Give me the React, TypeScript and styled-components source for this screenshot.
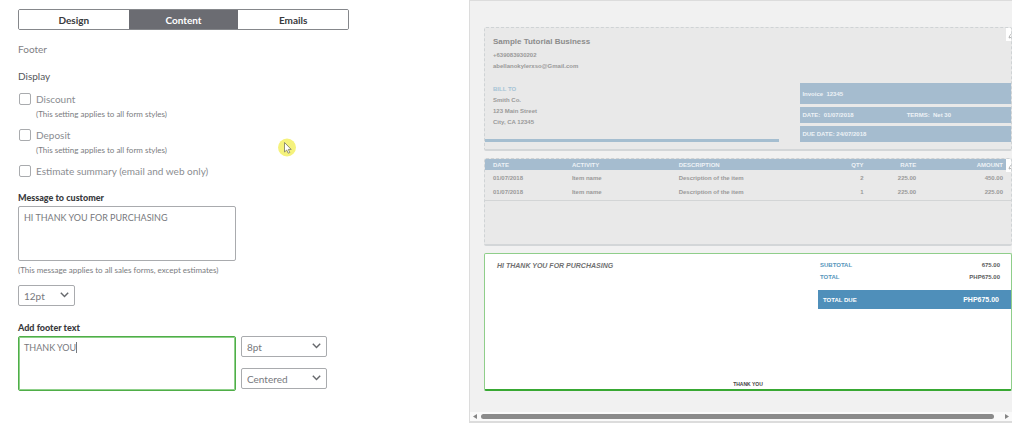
import React from "react";
import styled, { createGlobalStyle } from "styled-components";

const GlobalStyle = createGlobalStyle`
  *, *::before, *::after { box-sizing: border-box; }
  body {
    margin: 0;
    background: #fff;
    color: #7a7c80;
    font-family: Lato, "Liberation Sans", sans-serif;
  }
`;

const Page = styled.div`
  position: relative;
  display: grid;
  grid-template-columns: minmax(0, 469fr) minmax(0, 543fr);
  align-items: start;
  padding-right: 12px;
`;

/* ---------- settings column ---------- */

const Settings = styled.form`
  display: flex;
  flex-direction: column;
  align-items: flex-start;
  padding: 9px 18px 0;
`;

const Tabs = styled.div`
  display: flex;
  width: 100%;
  max-width: 331px;
  height: 21px;
  border: 1px solid #85878b;
  border-radius: 2px;
  overflow: hidden;
`;

const Tab = styled.button<{ $active?: boolean }>`
  flex: 1;
  padding: 0;
  border: 0;
  background: ${(p) => (p.$active ? "#6b6c72" : "#fff")};
  color: ${(p) => (p.$active ? "#fff" : "#393a3d")};
  font: 700 10px/18px Lato, sans-serif;
`;

const SectionTitle = styled.h2<{ $dark?: boolean }>`
  margin: ${(p) => (p.$dark ? "13px 0 9px" : "12px 0 0")};
  font-size: 10px;
  line-height: 14px;
  font-weight: 400;
  color: ${(p) => (p.$dark ? "#55575b" : "#7f8185")};
`;

const Option = styled.div`
  display: grid;
  grid-template-columns: 18px auto;
  align-items: center;
  padding-bottom: 5px;
`;

const Check = styled.input`
  appearance: none;
  width: 12px;
  height: 12px;
  margin: 0 0 0 1px;
  border: 1px solid #a9abae;
  border-radius: 2px;
  background: #fff;
`;

const OptionLabel = styled.label`
  font-size: 10px;
  line-height: 14px;
  color: #8b8d91;
`;

const OptionNote = styled.small`
  grid-column: 2;
  font-size: 8px;
  line-height: 17px;
`;

const FieldLabel = styled.label`
  font-size: 9px;
  line-height: 12px;
  font-weight: 900;
  color: #393a3d;
`;

const TextField = styled.div`
  position: relative;
  width: 218px;
`;

const TextArea = styled.textarea<{ $focused?: boolean }>`
  display: block;
  width: 100%;
  height: 55px;
  padding: 4px 5px;
  border: 1px solid ${(p) => (p.$focused ? "#4fae48" : "#a9abae")};
  box-shadow: ${(p) => (p.$focused ? "inset 0 0 0 1px #8fd08a" : "none")};
  border-radius: 2px;
  outline: 0;
  resize: none;
  background: #fff;
  color: #77797d;
  font: 400 9px/14px Lato, sans-serif;
`;

const Caret = styled.span`
  position: absolute;
  top: 6px;
  left: 58px;
  width: 1px;
  height: 11px;
  background: #77797d;
`;

const FieldNote = styled.small`
  padding: 3px 0 8px;
  font-size: 8px;
  line-height: 13px;
`;

const SelectBox = styled.div<{ $wide?: boolean }>`
  position: relative;
  width: ${(p) => (p.$wide ? 86 : 57)}px;
  height: 21px;
`;

const Select = styled.select`
  appearance: none;
  display: block;
  width: 100%;
  height: 100%;
  padding: 0 5px;
  border: 1px solid #a9abae;
  border-radius: 2px;
  background: #fff;
  color: #77797d;
  font: 400 10px/14px Lato, sans-serif;
`;

const Chevron = styled.svg`
  position: absolute;
  top: 7px;
  right: 6px;
  width: 9px;
  height: 6px;
  pointer-events: none;
`;

const FooterFields = styled.div`
  display: flex;
  align-items: flex-start;
  gap: 5px;
`;

const SelectStack = styled.div`
  display: flex;
  flex-direction: column;
  gap: 11px;
`;

const FieldGroup = styled.div<{ $top: number }>`
  display: flex;
  flex-direction: column;
  align-items: flex-start;
  gap: 2px;
  padding-top: ${(p) => p.$top}px;
`;

/* ---------- preview column ---------- */

const Preview = styled.section`
  display: flex;
  flex-direction: column;
  border: 1px solid #dcdcdc;
  border-width: 1px 0 2px 1px;
  background: #f1f1f1;
  font-family: "Liberation Sans", Arial, sans-serif;
  font-size: 6px;
  line-height: 12px;
  font-weight: 700;
  color: #999;
`;

const Sheet = styled.div`
  display: flex;
  flex-direction: column;
  gap: 7px;
  padding: 26px 0 21px 14px;
`;

const Card = styled.article`
  position: relative;
  overflow: hidden;
  border: 1px dashed #cfd3d5;
  border-bottom: 2px solid #d3d6d8;
  border-radius: 2px;
  background: #e9e9e9;
`;

const HeaderCard = styled(Card)`
  display: grid;
  grid-template-columns: minmax(0, 295fr) minmax(0, 211fr);
  column-gap: 21px;
  align-items: end;
  padding: 7px 0;
`;

const Business = styled.div`
  border-bottom: 3px solid #a5bed0;
  padding: 0 0 11px 8px;
`;

const BusinessName = styled.h1`
  margin: 0 0 1px;
  font-size: 8px;
  line-height: 14px;
  color: #8c8c8c;
`;

const Line = styled.p<{ $heading?: boolean }>`
  margin: ${(p) => (p.$heading ? "11px 0 0" : "0")};
  line-height: ${(p) => (p.$heading ? 12 : 11)}px;
  color: ${(p) => (p.$heading ? "#a5c3d5" : "inherit")};
`;

const Facts = styled.div`
  display: flex;
  flex-direction: column;
  gap: 3px;
`;

const Fact = styled.div<{ $tall?: boolean }>`
  display: grid;
  grid-template-columns: 1fr 1fr;
  align-items: center;
  height: ${(p) => (p.$tall ? 21 : 16)}px;
  padding-left: 2px;
  background: #a5bccf;
  color: #edf2f6;
  white-space: pre;
`;

const EditTag = styled.button`
  position: absolute;
  top: 0;
  right: 0;
  width: 5px;
  height: 13px;
  padding: 0;
  border: 0;
  overflow: hidden;
  background: #fff;

  svg { display: block; width: 9px; height: 9px; margin-left: 2px; }
`;

const ItemsCard = styled(Card)`
  min-height: 88px;
`;

const Items = styled.table`
  width: 100%;
  border-collapse: collapse;
  table-layout: fixed;
  border-bottom: 1px solid #d3d5d6;
`;

const HeadRow = styled.tr`
  height: 11px;
  background: #a5bccf;
  color: #edf2f6;
`;

const ItemRow = styled.tr`
  height: 15px;
`;

const Cell = styled.td<{ $right?: boolean }>`
  padding: 0 ${(p) => (p.$right ? 8 : 0)}px 0 8px;
  line-height: 10px;
  text-align: ${(p) => (p.$right ? "right" : "left")};
  white-space: nowrap;
`;

const TotalsCard = styled(Card)`
  display: flex;
  flex-direction: column;
  min-height: 138px;
  border: 1px solid #8fce8a;
  border-bottom: 2px solid #38a833;
  background: #fff;
`;

const TotalsTop = styled.div`
  display: grid;
  grid-template-columns: minmax(0, 333fr) minmax(0, 193fr);
  padding-top: 5px;
`;

const Message = styled.p`
  margin: 0;
  padding-left: 12px;
  font-size: 7px;
  line-height: 14px;
  font-style: italic;
  color: #707070;
`;

const Totals = styled.div`
  display: flex;
  flex-direction: column;
`;

const TotalRow = styled.div`
  display: flex;
  justify-content: space-between;
  padding: 0 11px 0 2px;
  color: #5796bb;

  b { color: #5c5c5c; }
`;

const TotalDue = styled.div`
  display: flex;
  align-items: center;
  justify-content: space-between;
  height: 19px;
  margin-top: 7px;
  padding: 0 12px 0 5px;
  background: #4f8fba;
  color: #fff;

  b { font-size: 7px; }
`;

const FooterText = styled.p`
  margin: auto 0 0;
  font-size: 5px;
  line-height: 10px;
  text-align: center;
  color: #444;
`;

const ScrollBar = styled.div`
  display: flex;
  align-items: center;
  gap: 4px;
  height: 9px;
  padding: 0 3px;
  background: #fafafa;
`;

const Arrow = styled.svg`
  width: 4px;
  height: 5px;
`;

const Thumb = styled.div`
  flex: 1;
  height: 5px;
  margin-right: 7px;
  border-radius: 3px;
  background: #8b8b8b;
`;

const Pointer = styled.svg`
  position: absolute;
  left: 278px;
  top: 138px;
  width: 18px;
  height: 19px;
`;

function DropDown({ label, value, wide }: { label: string; value: string; wide?: boolean }) {
  return (
    <SelectBox $wide={wide}>
      <Select aria-label={label} defaultValue={value}>
        <option>{value}</option>
      </Select>
      <Chevron viewBox="0 0 9 6" fill="none" stroke="#66686c" strokeWidth="1.4">
        <path d="M0.8 0.8L4.5 4.6L8.2 0.8" />
      </Chevron>
    </SelectBox>
  );
}

function EditButton() {
  return (
    <EditTag type="button" aria-label="Edit">
      <svg viewBox="0 0 9 9" fill="none" stroke="#a3a3a3" strokeWidth="0.8">
        <path d="M1 8L1.7 5.6L6 1.3L7.7 3L3.4 7.3Z" />
      </svg>
    </EditTag>
  );
}

const options = [
  { id: "discount", label: "Discount", note: "(This setting applies to all form styles)" },
  { id: "deposit", label: "Deposit", note: "(This setting applies to all form styles)" },
  { id: "estimate", label: "Estimate summary (email and web only)" },
];

const items = [
  ["01/07/2018", "Item name", "Description of the item", "2", "225.00", "450.00"],
  ["01/07/2018", "Item name", "Description of the item", "1", "225.00", "225.00"],
];

const columns = ["DATE", "ACTIVITY", "DESCRIPTION", "QTY", "RATE", "AMOUNT"];
const columnShares = ["15%", "20.3%", "25%", "13.2%", "10%", "16.5%"];

export default function App() {
  return (
    <>
      <GlobalStyle />
      <Page>
        <Settings>
          <Tabs>
            <Tab type="button">Design</Tab>
            <Tab type="button" $active>Content</Tab>
            <Tab type="button">Emails</Tab>
          </Tabs>
          <SectionTitle>Footer</SectionTitle>
          <SectionTitle $dark>Display</SectionTitle>
          {options.map((o) => (
            <Option key={o.id}>
              <Check type="checkbox" id={o.id} />
              <OptionLabel htmlFor={o.id}>{o.label}</OptionLabel>
              {o.note && <OptionNote>{o.note}</OptionNote>}
            </Option>
          ))}
          <FieldGroup $top={9}>
            <FieldLabel htmlFor="message">Message to customer</FieldLabel>
            <TextField>
              <TextArea id="message" defaultValue="HI THANK YOU FOR PURCHASING" />
            </TextField>
          </FieldGroup>
          <FieldNote>(This message applies to all sales forms, except estimates)</FieldNote>
          <DropDown label="Message size" value="12pt" />
          <FieldGroup $top={16}>
            <FieldLabel htmlFor="footer">Add footer text</FieldLabel>
            <FooterFields>
              <TextField>
                <TextArea id="footer" $focused defaultValue="THANK YOU" />
                <Caret />
              </TextField>
              <SelectStack>
                <DropDown label="Footer size" value="8pt" wide />
                <DropDown label="Footer alignment" value="Centered" wide />
              </SelectStack>
            </FooterFields>
          </FieldGroup>
        </Settings>

        <Preview>
          <Sheet>
            <HeaderCard>
              <Business>
                <BusinessName>Sample Tutorial Business</BusinessName>
                <Line>+639083930202</Line>
                <Line>abellanokylerxso@Gmail.com</Line>
                <Line $heading>BILL TO</Line>
                <Line>Smith Co.</Line>
                <Line>123 Main Street</Line>
                <Line>City, CA 12345</Line>
              </Business>
              <Facts>
                <Fact $tall>{"Invoice  12345"}</Fact>
                <Fact>
                  <span>{"DATE:  01/07/2018"}</span>
                  <span>{"TERMS:  Net 30"}</span>
                </Fact>
                <Fact>DUE DATE: 24/07/2018</Fact>
              </Facts>
              <EditButton />
            </HeaderCard>

            <ItemsCard>
              <Items>
                <colgroup>
                  {columnShares.map((w, i) => <col key={i} width={w} />)}
                </colgroup>
                <thead>
                  <HeadRow>
                    {columns.map((c, i) => (
                      <Cell as="th" key={c} $right={i > 2}>{c}</Cell>
                    ))}
                  </HeadRow>
                </thead>
                <tbody>
                  {items.map((row, r) => (
                    <ItemRow key={r}>
                      {row.map((v, i) => <Cell key={i} $right={i > 2}>{v}</Cell>)}
                    </ItemRow>
                  ))}
                </tbody>
              </Items>
              <EditButton />
            </ItemsCard>

            <TotalsCard>
              <TotalsTop>
                <Message>HI THANK YOU FOR PURCHASING</Message>
                <Totals>
                  <TotalRow>SUBTOTAL <b>675.00</b></TotalRow>
                  <TotalRow>TOTAL <b>PHP675.00</b></TotalRow>
                  <TotalDue>TOTAL DUE <b>PHP675.00</b></TotalDue>
                </Totals>
              </TotalsTop>
              <FooterText>THANK YOU</FooterText>
            </TotalsCard>
          </Sheet>
          <ScrollBar>
            <Arrow viewBox="0 0 4 5" fill="#858585"><path d="M4 0V5L0 2.5Z" /></Arrow>
            <Thumb />
            <Arrow viewBox="0 0 4 5" fill="#858585"><path d="M0 0V5L4 2.5Z" /></Arrow>
          </ScrollBar>
        </Preview>

        <Pointer viewBox="0 0 18 19">
          <circle cx="9" cy="9.5" r="9" fill="#f5f27c" />
          <path d="M6.5 4.5V14L8.7 12L10.2 15.2L11.8 14.5L10.3 11.4H13.2Z" fill="#fff" stroke="#77775f" strokeWidth="0.8" />
        </Pointer>
      </Page>
    </>
  );
}
